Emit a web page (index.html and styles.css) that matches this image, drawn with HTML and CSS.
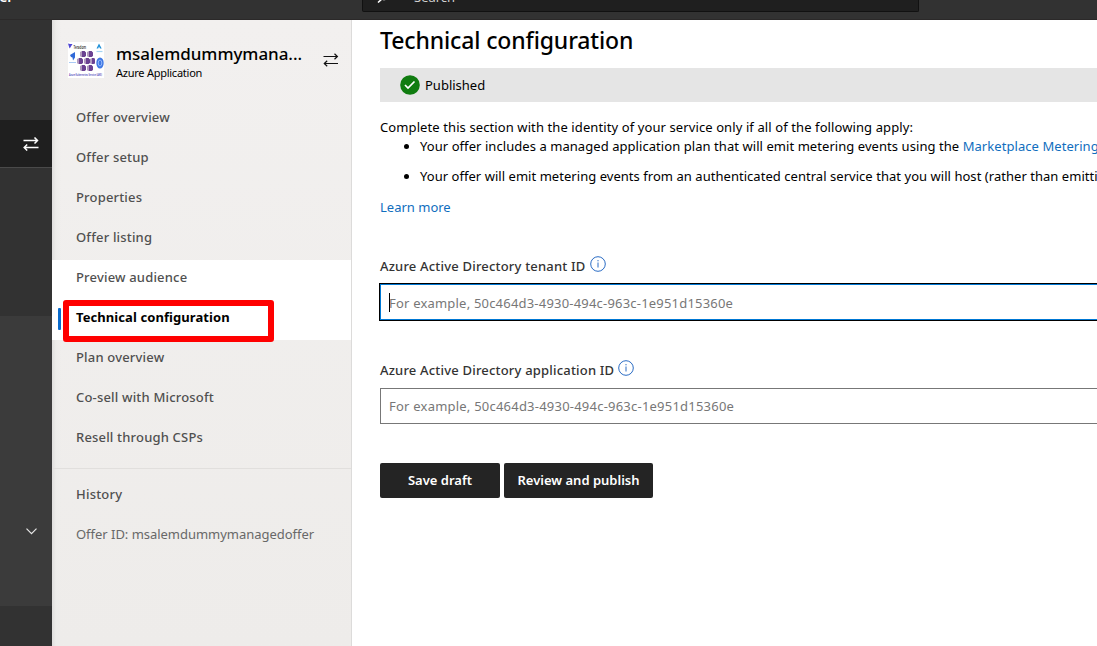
FILE: index.html
```
<!DOCTYPE html>
<html lang="en">
<head>
<meta charset="utf-8">
<title>Technical configuration</title>
<link rel="stylesheet" href="styles.css">
</head>
<body>
<header class="topbar">
  <span class="brand">Partner Center</span>
  <div class="search">
    <svg class="search-icon" width="12" height="12" viewBox="0 0 12 12" fill="none" stroke="#fff" stroke-width="1.5"><path d="M1 11.500L5.500 7.500"/><circle cx="7" cy="4.500" r="4"/></svg>
    <span class="search-text">Search</span>
  </div>
</header>
<div class="layout">
  <div class="rail">
    <div class="rail-space"></div>
    <div class="rail-switch">
      <svg width="16" height="14" viewBox="0 0 16 14" fill="none" stroke="#fff" stroke-width="1.5"><path d="M.5 3.500H14.500M11.500 .5l3 3-3 3M15.500 10.500H1.200M4.200 7.500l-3 3 3 3"/></svg>
    </div>
    <div class="rail-gap"></div>
    <div class="rail-group">
      <svg width="11" height="7" viewBox="0 0 11 7" fill="none" stroke="#e8e8e8" stroke-width="1.2"><path d="M.5 .7l5 5 5-5"/></svg>
    </div>
  </div>
  <aside class="side">
    <div class="offer">
      <svg class="logo" width="36" height="36" viewBox="0 0 36 36">
        <rect width="36" height="36" fill="#fff"/>
        <path d="M0 1.500l4 1-2.500 4zM2 2l2.500 0-2.500 4" fill="#5148d4"/>
        <text class="logo-name" x="5.500" y="6.500" textLength="12.500" lengthAdjust="spacingAndGlyphs">Teradom</text>
        <path d="M31 1.500l-2.500 5h1.700l.8-2 1 2h1.700z" fill="#1d8fd8"/>
        <path d="M28.500 9.500h6" stroke="#a4d4f2" stroke-width="1.200"/>
        <path d="M7 10l-5 3 1 2 1.500 .5 .5 3L7 15.500z" fill="#3069d8"/>
        <path d="M1 20.500h7" stroke="#93bdf2" stroke-width=".8"/>
        <g fill="#b29bbf"><path d="M12 10l2-1h3v6h-4l-1-1zM19 10l2-1h3v6h-4l-1-1zM9 17l2-1h3v6h-4l-1-1zM16 17l2-1h3v6h-4l-1-1zM22 17l2-1h3v6h-4l-1-1zM12 24l2-1h3v6h-4l-1-1zM19 24l2-1h3v6h-4l-1-1z"/></g>
        <g fill="#6b4192"><path d="M14 9h2.500l1.500 1.500V14l-1.500 1H14zM21 9h2.500l1.500 1.500V14L23.500 15H21zM11 16h2.500l1.500 1.500V21l-1.500 1H11zM18 16h2.500l1.500 1.500V21l-1.500 1H18zM24 16h1.500l1.500 1.500V21l-1.500 1H24zM14 23h2.500l1.500 1.500V28l-1.500 1H14zM21 23h2.500l1.500 1.500V28L23.500 29H21z"/></g>
        <ellipse cx="32" cy="21" rx="3.700" ry="5.500" fill="#3f78e3"/>
        <ellipse cx="32" cy="21" rx="1.800" ry="3" fill="none" stroke="#aac7ff" stroke-width=".8"/>
        <text class="logo-caption" x="1" y="34" textLength="33" lengthAdjust="spacingAndGlyphs">Azure Kubernetes Service (AKS)</text>
      </svg>
      <div class="offer-text">
        <div class="offer-name">msalemdummymana...</div>
        <div class="offer-kind">Azure Application</div>
      </div>
      <svg class="swap" width="16" height="14" viewBox="0 0 16 14" fill="none" stroke="#111" stroke-width="1.200"><path d="M.5 3.500H14.500M11.500 .8l2.900 2.700-2.900 2.700M15 10.500H1.200M4.200 7.800l-2.900 2.700 2.900 2.700"/></svg>
    </div>
    <nav class="nav">
      <a>Offer overview</a>
      <a>Offer setup</a>
      <a>Properties</a>
      <a>Offer listing</a>
      <a class="lit">Preview audience</a>
      <a class="lit current">Technical configuration<span class="callout"></span></a>
      <a>Plan overview</a>
      <a>Co-sell with Microsoft</a>
      <a>Resell through CSPs</a>
    </nav>
    <div class="side-foot">
      <div class="history">History</div>
      <div class="offer-id">Offer ID: msalemdummymanagedoffer</div>
    </div>
  </aside>
  <main class="main">
    <h1>Technical configuration</h1>
    <div class="status">
      <svg width="20" height="20" viewBox="0 0 20 20"><circle cx="10" cy="10" r="9.800" fill="#107c10"/><path d="M5 10l3 3 6.500-6.500" fill="none" stroke="#fff" stroke-width="1.700"/></svg>
      <span>Published</span>
    </div>
    <p class="intro">Complete this section with the identity of your service only if all of the following apply:</p>
    <ul class="rules">
      <li class="rule-one">Your offer includes a managed application plan that will emit metering events using the <a>Marketplace Metering</a></li>
      <li class="rule-two">Your offer will emit metering events from an authenticated central service that you will host (rather than emitting</li>
    </ul>
    <a class="learn">Learn more</a>
    <div class="field">
      <div class="label"><span>Azure Active Directory tenant ID</span><svg width="16" height="16" viewBox="0 0 16 16"><circle cx="8" cy="8" r="7.300" fill="none" stroke="#2a6cc4"/><path d="M8 6.500v5M8 4v1.300" stroke="#2a6cc4"/></svg></div>
      <div class="input focused"><span class="caret"></span>For example, 50c464d3-4930-494c-963c-1e951d15360e</div>
    </div>
    <div class="field second">
      <div class="label"><span>Azure Active Directory application ID</span><svg width="16" height="16" viewBox="0 0 16 16"><circle cx="8" cy="8" r="7.300" fill="none" stroke="#2a6cc4"/><path d="M8 6.500v5M8 4v1.300" stroke="#2a6cc4"/></svg></div>
      <div class="input">For example, 50c464d3-4930-494c-963c-1e951d15360e</div>
    </div>
    <div class="actions">
      <button class="save">Save draft</button>
      <button class="review">Review and publish</button>
    </div>
  </main>
</div>
</body>
</html>
```
FILE: styles.css
```
* { box-sizing: border-box; }
body {
  margin: 0;
  height: 646px;
  overflow: hidden;
  font-family: "Noto Sans", "Open Sans", sans-serif;
  font-size: 13px;
  line-height: 20px;
  color: #000;
  background: #fff;
  display: flex;
  flex-direction: column;
}
.topbar {
  height: 20px;
  flex: none;
  background: #323232;
  border-bottom: 1px solid #2b2929;
  display: flex;
  align-items: flex-start;
}
.brand {
  width: 96px;
  margin: -13px 354px 0 -88px;
  flex: none;
  text-align: right;
  color: #fff;
  font-weight: 600;
  font-size: 14px;
  white-space: nowrap;
}
.search {
  width: 557px;
  height: 12px;
  flex: none;
  background: #1f1f1f;
  border: 1px solid #111;
  border-top: 0;
  border-radius: 0 0 2px 2px;
  display: flex;
}
.search-icon { margin: -9px 0 0 14px; }
.search-text { margin: -13px 0 0 25px; color: #d0d0d0; }
.layout { flex: 1; display: grid; grid-template-columns: 52px 300px 1fr; min-height: 0; }
.rail { background: #323232; display: flex; flex-direction: column; }
.rail-space { height: 100px; }
.rail-switch {
  height: 48px;
  background: #1f1f1f;
  border-bottom: 1px solid #4a4a4a;
  padding: 17px 0 0 23px;
  line-height: 0;
}
.rail-gap { height: 148px; }
.rail-group { height: 290px; background: #3b3b3b; padding: 212px 0 0 26px; line-height: 0; }
.side {
  background: linear-gradient(90deg, #dfdedd 0, #edecea 4px, transparent 9px), linear-gradient(#f2f0ef, #eeecea);
  border-right: 1px solid #dcdbda;
}
.offer { height: 80px; display: flex; padding: 22px 0 0 16px; }
.logo { flex: none; }
.logo-name { font: 600 5px "Noto Sans", sans-serif; fill: #333; }
.logo-caption { font: 600 3px "Noto Sans", sans-serif; fill: #5045b8; }
.offer-text { width: 219px; padding-left: 12px; flex: none; }
.offer-name { font-size: 17px; font-weight: 500; line-height: 24px; letter-spacing: -.05px; }
.offer-kind { font-size: 11px; line-height: 14px; letter-spacing: -.25px; }
.swap { margin-top: 11px; }
.nav a {
  display: block;
  height: 40px;
  padding: 7px 0 0 24px;
  color: #505050;
  font-weight: 500;
  letter-spacing: .18px;
}
.nav .lit { background: #fff; }
.nav .current { position: relative; color: #000; font-weight: 700; letter-spacing: .08px; }
.current::before {
  content: "";
  position: absolute;
  left: 6px;
  top: 8px;
  width: 3px;
  height: 22px;
  border-radius: 1px;
  background: #0a6cce;
}
.callout {
  position: absolute;
  left: 11px;
  top: 0;
  width: 211px;
  height: 42px;
  border: 6px solid #f00;
  border-radius: 3px;
  z-index: 2;
}
.side-foot { margin-top: 8px; border-top: 1px solid #e1dfdd; padding: 15px 0 0 24px; color: #505050; }
.history { font-weight: 500; letter-spacing: .2px; }
.offer-id { margin-top: 20px; color: #686868; white-space: nowrap; letter-spacing: -.03px; }
.main { padding-left: 28px; min-width: 0; overflow: hidden; white-space: nowrap; }
h1 { margin: 4px 0 0; font-size: 23px; line-height: 32px; font-weight: 500; letter-spacing: -.13px; }
.status {
  height: 34px;
  margin-top: 12px;
  padding-left: 20px;
  background: #e5e5e5;
  display: flex;
  align-items: center;
  gap: 5px;
}
.intro { margin: 15px 0 0; letter-spacing: .1px; }
.rules { margin: 0; padding-left: 40px; }
.rules li { margin-bottom: 10px; }
.rules .rule-one { margin-top: -1px; letter-spacing: .06px; }
.rules .rule-two { letter-spacing: .04px; }
.rules a, .learn { color: #106ebe; }
.learn { display: block; margin-top: 11px; }
.field { margin-top: 36px; }
.label { height: 30px; display: flex; color: #333; font-weight: 500; line-height: 26px; letter-spacing: .19px; }
.label svg { margin: 3px 0 0 4px; }
.input {
  height: 36px;
  border: 1px solid #777;
  border-right: 0;
  padding-left: 8px;
  line-height: 34px;
  letter-spacing: .22px;
  color: #777;
}
.second .input { margin-top: 1px; }
.input.focused {
  position: relative;
  height: 38px;
  margin: 0 -4px 0 -1px;
  padding-left: 9px;
  border: 1px solid #000;
  box-shadow: inset 0 0 0 1px #0078d4;
  line-height: 38px;
  letter-spacing: .2px;
}
.caret { position: absolute; left: 9px; top: 9px; width: 1px; height: 19px; background: #000; }
.actions { display: flex; gap: 4px; margin-top: 39px; }
.actions button {
  height: 35px;
  padding: 0 0 1px;
  border: 0;
  border-radius: 2px;
  background: #242424;
  color: #fff;
  font: 600 13px "Noto Sans", sans-serif;
}
.save { width: 120px; }
.review { width: 149px; }
```
